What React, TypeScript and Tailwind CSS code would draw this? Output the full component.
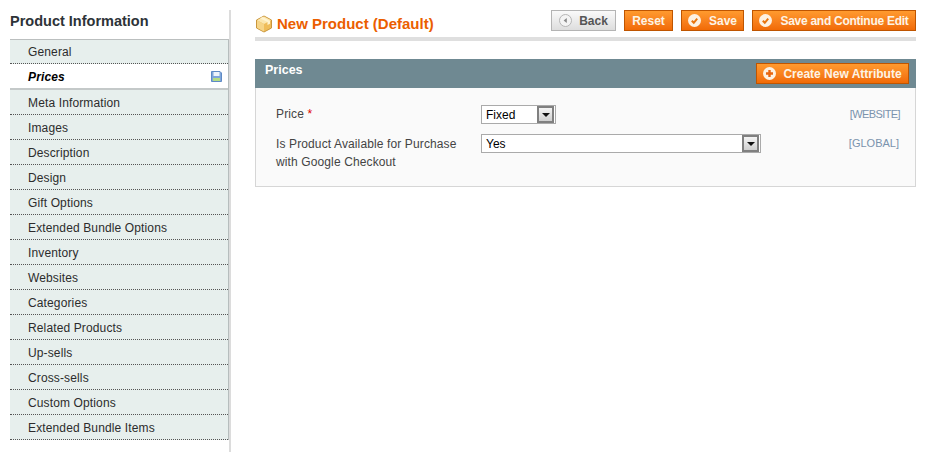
const items = [
  "Meta Information", "Images", "Description", "Design", "Gift Options",
  "Extended Bundle Options", "Inventory", "Websites", "Categories", "Related Products",
  "Up-sells", "Cross-sells", "Custom Options", "Extended Bundle Items",
];

function CheckIcon() {
  return (
    <svg width="13" height="13" viewBox="0 0 13 13" className="shrink-0">
      <circle cx="6.5" cy="6.5" r="6.5" fill="#fdf1e2" />
      <path d="M3.8 6.8 L5.8 8.8 L9.2 4.6" fill="none" stroke="#e8750f" strokeWidth="2" />
    </svg>
  );
}

function PlusIcon() {
  return (
    <svg width="13" height="13" viewBox="0 0 13 13" className="shrink-0">
      <circle cx="6.5" cy="6.5" r="6.5" fill="#fdf1e2" />
      <path d="M6.5 3 V10 M3 6.5 H10" fill="none" stroke="#e8650f" strokeWidth="2.4" />
    </svg>
  );
}

function BackIcon() {
  return (
    <svg width="13" height="13" viewBox="0 0 13 13" className="shrink-0">
      <circle cx="6.5" cy="6.5" r="6" fill="#f4f4f4" stroke="#b5b5b5" />
      <path d="M7.8 4 V9 L4.6 6.5 Z" fill="#8a8a8a" />
    </svg>
  );
}

function BoxIcon() {
  return (
    <svg width="18" height="18" viewBox="0 0 18 18" className="shrink-0">
      <path d="M9 1 L16.5 5 V13 L9 17 L1.5 13 V5 Z" fill="#efbd5a" stroke="#c9963c" />
      <path d="M2 5.2 L9 1.5 L16 5.2 L9 9 Z" fill="#fbe7b0" />
      <path d="M9 9 V16.5 L2 12.8 V5.2 Z" fill="#f6d588" />
      <path d="M5 3.2 L12.5 7 V10 L15 8.8 V6 L7.5 2 Z" fill="#fff3cf" />
    </svg>
  );
}

function SaveIcon() {
  return (
    <svg width="11" height="11" viewBox="0 0 11 11">
      <path d="M0.5 0.5 H9 L10.5 2 V10.5 H0.5 Z" fill="#7fa6da" stroke="#5f8ac4" />
      <rect x="2.5" y="1" width="6" height="4" fill="#eef4fb" />
      <rect x="2" y="7" width="7" height="3" fill="#b4dc84" />
    </svg>
  );
}

function SelectArrow() {
  return (
    <span className="flex items-center justify-center w-[17px] h-[17px] bg-gradient-to-b from-[#f4f4f4] to-[#cfcfcf] border-2 border-[#808080] box-border">
      <svg width="8" height="4" viewBox="0 0 8 4">
        <path d="M0 0 H8 L4 4 Z" fill="#111" />
      </svg>
    </span>
  );
}

function OrangeButton({ label, icon, className }: { label: string; icon?: React.ReactNode; className: string }) {
  return (
    <button className={`flex items-center justify-center h-[21px] bg-gradient-to-b from-[#ff9a2e] to-[#f16a05] border border-[#bf5500] text-[12px] font-bold text-[#fdf4e6] ${className}`}>
      {icon}
      <span>{label}</span>
    </button>
  );
}

export default function App() {
  return (
    <div className="flex w-[925px] h-[452px] bg-white overflow-hidden text-[12px] text-[#2f2f2f]" style={{ fontFamily: '"Liberation Sans", Arial, sans-serif' }}>
      {/* sidebar */}
      <aside className="w-[221px] ml-[10px] mt-[10px] shrink-0 border-r-2 border-[#dcdcdc]">
        <h3 className="h-[30px] pt-[2px] text-[14.5px] leading-[18px] font-bold text-[#2d3338] border-b border-[#bbbfbf]">
          Product Information
        </h3>
        <ul className="border-r border-[#b6bdbd] tracking-[0.13px]">
          <li className="flex items-center h-[24px] pl-[18px] bg-[#e7efed] border-b border-dotted border-[#555] text-[#2c2c2c]">
            General
          </li>
          <li className="flex items-center justify-between h-[26px] pt-[1px] pl-[18px] pr-[6px] bg-white border-b-2 border-[#c4c9c9] italic font-bold text-black">
            <span>Prices</span>
            <SaveIcon />
          </li>
          {items.map((item) => (
            <li key={item} className="flex items-center h-[25px] pt-[1px] pl-[18px] bg-[#e7efed] border-b border-dotted border-[#555] text-[#2c2c2c]">
              {item}
            </li>
          ))}
        </ul>
      </aside>

      {/* main column */}
      <main className="w-[661px] ml-[24px] mt-[10px] shrink-0">
        <div className="flex items-start h-[27px]">
          <div className="flex items-center gap-[4px] pt-[5px]">
            <BoxIcon />
            <h3 className="text-[15px] leading-[18px] font-bold text-[#eb5e00]">New Product (Default)</h3>
          </div>
          <div className="flex ml-auto gap-[8px]">
            <button className="flex items-center justify-center gap-[7px] w-[65px] h-[21px] bg-gradient-to-b from-[#fafafa] to-[#dddddd] border border-[#b4b4b4] text-[12px] font-bold text-[#555]">
              <BackIcon />
              <span>Back</span>
            </button>
            <OrangeButton label="Reset" className="w-[49px]" />
            <OrangeButton label="Save" icon={<CheckIcon />} className="w-[63px] gap-[8px]" />
            <OrangeButton label="Save and Continue Edit" icon={<CheckIcon />} className="w-[164px] gap-[8px] tracking-[-0.27px]" />
          </div>
        </div>
        <div className="h-[4px] bg-[#dfdfdf]" />

        {/* panel */}
        <section className="mt-[18px]">
          <div className="flex items-start justify-between h-[29px] pl-[10px] pr-[7px] pt-[4px] bg-[#6f8992]">
            <span className="text-[12.5px] leading-[14px] font-bold text-white">Prices</span>
            <OrangeButton label="Create New Attribute" icon={<PlusIcon />} className="w-[153px] gap-[7px]" />
          </div>
          <div className="h-[99px] px-[20px] pt-[17px] bg-[#fafafa] border border-t-0 border-[#d6d6d6]">
            <div className="flex items-start h-[29px]">
              <label className="w-[205px] leading-[19px] tracking-[0.13px] text-[#444]">
                Price <span className="text-[#e00000]">*</span>
              </label>
              <div className="flex items-center justify-between w-[75px] h-[19px] pl-[4px] pr-[1px] bg-white border border-[#aaa] text-black">
                <span>Fixed</span>
                <SelectArrow />
              </div>
              <span className="ml-auto mr-[-5px] leading-[19px] text-[11px] tracking-[-0.6px] text-[#7a93ad]">[WEBSITE]</span>
            </div>
            <div className="flex items-start">
              <label className="w-[205px] pr-[20px] pt-[1px] leading-[18px] tracking-[0.12px] text-[#444]">
                Is Product Available for Purchase with Google Checkout
              </label>
              <div className="flex items-center justify-between w-[280px] h-[19px] pl-[4px] pr-[1px] bg-white border border-[#aaa] text-black">
                <span>Yes</span>
                <SelectArrow />
              </div>
              <span className="ml-auto mr-[-4px] leading-[18px] text-[11px] text-[#7a93ad]">[GLOBAL]</span>
            </div>
          </div>
        </section>
      </main>
    </div>
  );
}
